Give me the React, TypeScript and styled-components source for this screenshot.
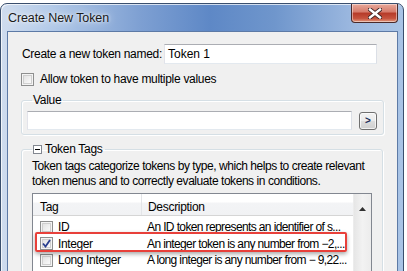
import React from "react";
import styled, { createGlobalStyle } from "styled-components";

const Global = createGlobalStyle`
  html, body { margin: 0; padding: 0; background: #ffffff; }
  body { font-family: "Liberation Sans", Arial, sans-serif; overflow: hidden; white-space: nowrap; }
  * { box-sizing: border-box; }
`;

const Page = styled.div`
  width: 407px;
  height: 271px;
  padding-top: 3px;
  overflow: hidden;
`;

const Window = styled.div`
  width: 404px;
  height: 300px;
  border: 1px solid #3a4f6e;
  border-radius: 7px 7px 0 0;
  background: linear-gradient(90deg, #cfdcee 0%, #b4cbe9 12%, #7d9fd2 35%, #5e88c6 52%, #6f96cc 68%, #9db9e0 88%, #a9c4e6 100%);
  box-shadow: inset 1px 1px 0 rgba(255,255,255,0.7);
  padding: 0 5px 0 6px;
  display: flex;
  flex-direction: column;
`;

const TitleBar = styled.div`
  height: 27px;
  display: flex;
  align-items: flex-start;
  justify-content: space-between;
`;

const Title = styled.div`
  margin-top: 7px;
  margin-left: 1px;
  font-size: 12.5px;
  color: #1a1a1a;
  letter-spacing: -0.1px;
  text-shadow: 0 0 8px rgba(255,255,255,0.9), 0 0 3px rgba(255,255,255,0.9);
`;

const Close = styled.div`
  width: 47px;
  height: 19px;
  border: 1px solid #4a2a2a;
  border-top: none;
  border-radius: 0 0 4px 4px;
  background: linear-gradient(180deg, #e9a99b 0%, #d57a6a 45%, #b53a28 50%, #c6533e 80%, #e29a80 100%);
  box-shadow: inset 0 0 0 1px rgba(255,255,255,0.45);
  display: flex;
  align-items: center;
  justify-content: center;
`;

const Client = styled.div`
  flex: 1;
  background: #f0f0f0;
  border: 1px solid #5d7aa6;
  display: flex;
  flex-direction: column;
  padding: 12px 13px 0 13px;
`;

const NameRow = styled.div`
  display: flex;
  align-items: center;
  padding-left: 1px;
`;

const Label = styled.span`
  font-size: 12px;
  color: #000;
  width: 142px;
  letter-spacing: -0.3px;
`;

const TextBox = styled.div<{ $w: number; $h: number }>`
  width: ${(p) => p.$w}px;
  height: ${(p) => p.$h}px;
  background: #fff;
  border: 1px solid #e3e9ef;
  border-top-color: #abadb3;
  border-left-color: #e2e3ea;
  border-right-color: #dbdfe6;
  font-size: 12px;
  padding: 1px 0 0 3px;
  color: #000;
  line-height: 16px;
`;

const CheckRow = styled.div`
  display: flex;
  align-items: center;
  margin-top: 8px;
  gap: 6px;
  font-size: 12px;
  letter-spacing: -0.3px;
`;

const Box = styled.div`
  width: 13px;
  height: 13px;
  border: 1px solid #8e8f8f;
  background: linear-gradient(135deg, #dcdcdc 0%, #f6f6f6 70%, #ffffff 100%);
  box-shadow: inset 0 0 0 1px #f4f4f4, inset 0 0 0 2px #cfcfcf;
  display: flex;
  align-items: center;
  justify-content: center;
  flex: none;
`;

const Group = styled.fieldset<{ $mt: number }>`
  margin: ${(p) => p.$mt}px 0 0 0;
  width: 362px;
  padding: 0 6px 4px 5px;
  border: 1px solid #d5dfe5;
  border-radius: 3px;
  box-shadow: inset 1px 1px 0 #fff, 1px 1px 0 #fff;
`;

const Legend = styled.legend`
  margin-left: 5px;
  padding: 0 2px 0 1px;
  font-size: 12px;
  line-height: 14px;
  letter-spacing: -0.3px;
  display: flex;
  align-items: center;
  gap: 3px;
`;

const ValueRow = styled.div`
  display: flex;
  align-items: center;
  gap: 7px;
  margin-top: 4px;
`;

const SmallBtn = styled.div`
  width: 18px;
  height: 18px;
  border: 1px solid #707070;
  border-radius: 3px;
  background: linear-gradient(180deg, #f2f2f2 0%, #ebebeb 50%, #dddddd 51%, #cfcfcf 100%);
  box-shadow: inset 0 0 0 1px rgba(255,255,255,0.7);
  font-size: 10px;
  font-weight: bold;
  color: #1c2f5a;
  display: flex;
  align-items: center;
  justify-content: center;
  line-height: 1;
`;

const Minus = styled.div`
  width: 9px;
  height: 9px;
  border: 1px solid #828790;
  background: #fff;
  display: flex;
  align-items: center;
  justify-content: center;
  &::after { content: ""; width: 5px; height: 1px; background: #000; }
`;

const Desc = styled.div`
  font-size: 12px;
  line-height: 15px;
  letter-spacing: -0.45px;
  margin: 3px 0 0 5px;
  color: #000;
`;

const List = styled.div`
  position: relative;
  margin: 4px 0 0 5px;
  width: 340px;
  height: 90px;
  border: 1px solid #828790;
  background: #fff;
  display: flex;
`;

const ListMain = styled.div`
  flex: 1;
  display: flex;
  flex-direction: column;
  overflow: hidden;
`;

const Header = styled.div`
  height: 22px;
  display: grid;
  grid-template-columns: 108px 1fr;
  background: linear-gradient(180deg, #ffffff 0%, #ffffff 40%, #f3f4f6 41%, #f1f2f4 100%);
  border-bottom: 1px solid #d5d5d5;
`;

const HeadCell = styled.div<{ $sep?: boolean }>`
  font-size: 12px;
  padding-left: ${(p) => (p.$sep ? 6 : 7)}px;
  display: flex;
  align-items: center;
  padding-top: 4px;
  border-left: ${(p) => (p.$sep ? "1px solid #e3e5e8" : "none")};
  letter-spacing: -0.3px;
`;

const Rows = styled.div`
  padding-top: 3px;
`;

const Row = styled.div`
  height: 16.5px;
  display: grid;
  grid-template-columns: 108px 1fr;
  font-size: 12px;
  letter-spacing: -0.4px;
`;

const TagCell = styled.div`
  display: flex;
  align-items: center;
  gap: 5px;
  padding-left: 7px;
`;

const DescCell = styled.div`
  padding-left: 6px;
  overflow: hidden;
  display: flex;
  align-items: center;
  letter-spacing: -0.62px;
`;

const ScrollBar = styled.div`
  width: 18px;
  background: linear-gradient(90deg, #e6e6e6 0%, #f2f2f2 50%, #ececec 100%);
  border-left: 1px solid #ececec;
  display: flex;
  justify-content: center;
  padding-top: 13px;
`;

const Highlight = styled.div`
  position: absolute;
  left: 2px;
  top: 38px;
  width: 312px;
  height: 20px;
  border: 2px solid #e8403a;
  border-radius: 2px;
  box-shadow: 0 2px 4px rgba(0,0,0,0.35);
  pointer-events: none;
`;

const rows = [
  { tag: "ID", desc: "An ID token represents an identifier of s...", checked: false },
  { tag: "Integer", desc: "An integer token is any number from \u22122,...", checked: true },
  { tag: "Long Integer", desc: "A long integer is any number from \u2212 9,22...", checked: false },
];

export default function App() {
  return (
    <Page>
      <Global />
      <Window>
        <TitleBar>
          <Title>Create New Token</Title>
          <Close>
            <svg width="14" height="11" viewBox="0 0 14 11">
              <path d="M2 1.5 L12 9.5 M12 1.5 L2 9.5" stroke="#3b2222" strokeWidth="4.2" strokeLinecap="square" />
              <path d="M2 1.5 L12 9.5 M12 1.5 L2 9.5" stroke="#ffffff" strokeWidth="2.4" strokeLinecap="square" />
            </svg>
          </Close>
        </TitleBar>
        <Client>
          <NameRow>
            <Label>Create a new token named:</Label>
            <TextBox $w={213} $h={20}>Token 1</TextBox>
          </NameRow>
          <CheckRow>
            <Box />
            <span>Allow token to have multiple values</span>
          </CheckRow>
          <Group $mt={7}>
            <Legend>Value</Legend>
            <ValueRow>
              <TextBox $w={325} $h={19} />
              <SmallBtn>&gt;</SmallBtn>
            </ValueRow>
          </Group>
          <Group $mt={7}>
            <Legend>
              <Minus />
              Token Tags
            </Legend>
            <Desc>
              Token tags categorize tokens by type, which helps to create relevant
              <br />
              token menus and to correctly evaluate tokens in conditions.
            </Desc>
            <List>
              <ListMain>
                <Header>
                  <HeadCell>Tag</HeadCell>
                  <HeadCell $sep>Description</HeadCell>
                </Header>
                <Rows>
                  {rows.map((r) => (
                    <Row key={r.tag}>
                      <TagCell>
                        <Box>
                          {r.checked && (
                            <svg width="9" height="9" viewBox="0 0 9 9">
                              <path d="M1 4.5 L3.5 7.5 L8 1" stroke="#2a3f8f" strokeWidth="1.8" fill="none" />
                            </svg>
                          )}
                        </Box>
                        {r.tag}
                      </TagCell>
                      <DescCell>{r.desc}</DescCell>
                    </Row>
                  ))}
                </Rows>
              </ListMain>
              <ScrollBar>
                <svg width="7" height="4" viewBox="0 0 7 4">
                  <path d="M0 4 L3.5 0 L7 4 Z" fill="#303030" />
                </svg>
              </ScrollBar>
              <Highlight />
            </List>
          </Group>
        </Client>
      </Window>
    </Page>
  );
}
